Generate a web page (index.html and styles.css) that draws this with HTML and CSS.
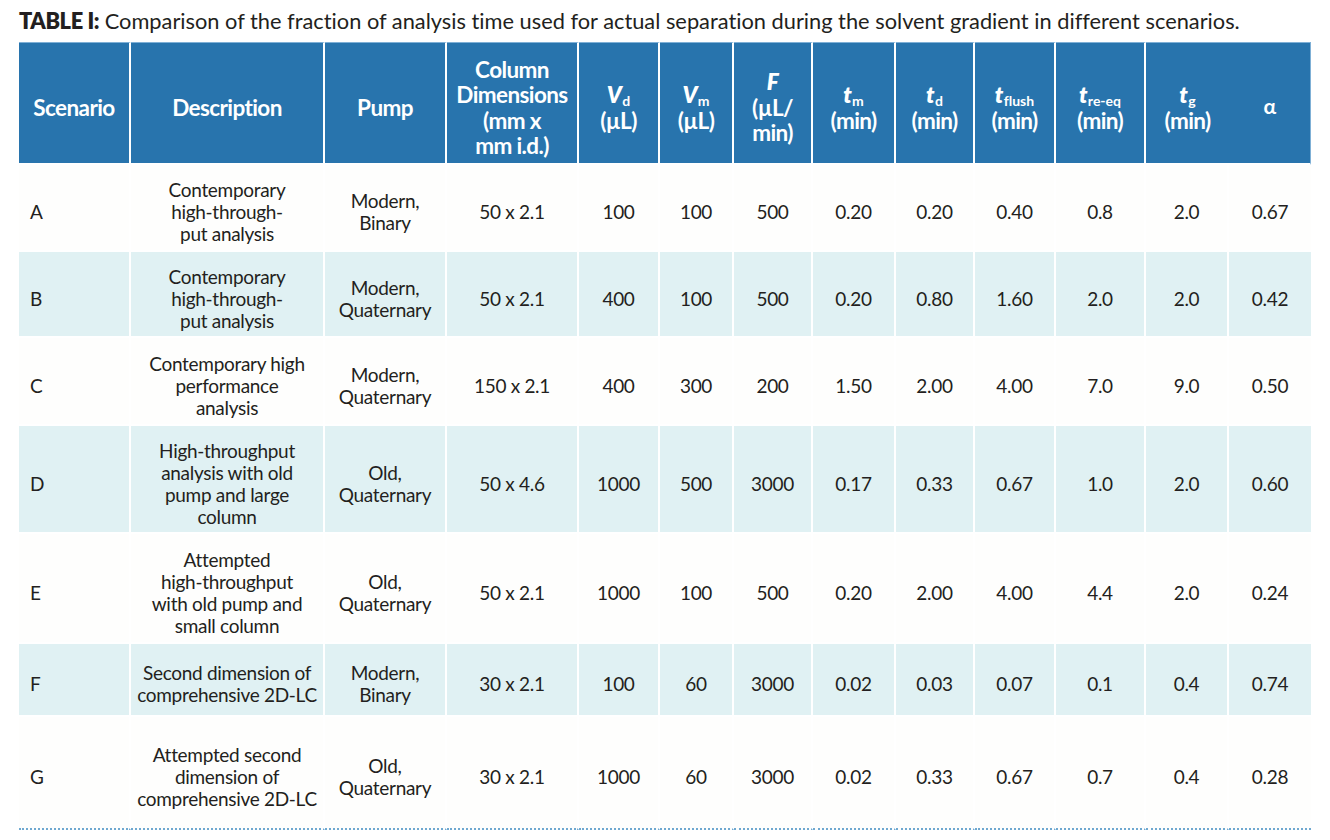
FILE: index.html
```html
<!DOCTYPE html>
<html>
<head>
<meta charset="utf-8">
<link rel="stylesheet" href="styles.css">
</head>
<body>
<div class="page">
  <p class="caption"><b>TABLE I:</b> Comparison of the fraction of analysis time used for actual separation during the solvent gradient in different scenarios.</p>
  <table class="data">
    <colgroup>
      <col class="c-scn"><col class="c-desc"><col class="c-pump"><col class="c-dim">
      <col class="c-vd"><col class="c-vm"><col class="c-f"><col class="c-tm">
      <col class="c-td"><col class="c-tfl"><col class="c-tre"><col class="c-tg"><col class="c-a">
    </colgroup>
    <thead>
      <tr>
        <th>Scenario</th>
        <th>Description</th>
        <th>Pump</th>
        <th>Column<br>Dimensions<br>(mm x<br>mm i.d.)</th>
        <th><i>V</i><sub>d</sub><br>(µL)</th>
        <th><i>V</i><sub>m</sub><br>(µL)</th>
        <th><i>F</i><br>(µL/<br>min)</th>
        <th><i>t</i><sub>m</sub><br>(min)</th>
        <th><i>t</i><sub>d</sub><br>(min)</th>
        <th><i>t</i><sub>flush</sub><br>(min)</th>
        <th><i>t</i><sub>re-eq</sub><br>(min)</th>
        <th class="no-div"><i>t</i><sub>g</sub><br>(min)</th>
        <th class="alpha">α</th>
      </tr>
    </thead>
    <tbody>
      <tr>
        <td class="scn">A</td><td>Contemporary<br>high-through-<br>put analysis</td><td>Modern,<br>Binary</td><td>50 x 2.1</td>
        <td>100</td><td>100</td><td>500</td><td>0.20</td><td>0.20</td><td>0.40</td><td>0.8</td><td>2.0</td><td>0.67</td>
      </tr>
      <tr>
        <td class="scn">B</td><td>Contemporary<br>high-through-<br>put analysis</td><td>Modern,<br>Quaternary</td><td>50 x 2.1</td>
        <td>400</td><td>100</td><td>500</td><td>0.20</td><td>0.80</td><td>1.60</td><td>2.0</td><td>2.0</td><td>0.42</td>
      </tr>
      <tr>
        <td class="scn">C</td><td>Contemporary high<br>performance<br>analysis</td><td>Modern,<br>Quaternary</td><td>150 x 2.1</td>
        <td>400</td><td>300</td><td>200</td><td>1.50</td><td>2.00</td><td>4.00</td><td>7.0</td><td>9.0</td><td>0.50</td>
      </tr>
      <tr>
        <td class="scn">D</td><td>High-throughput<br>analysis with old<br>pump and large<br>column</td><td>Old,<br>Quaternary</td><td>50 x 4.6</td>
        <td>1000</td><td>500</td><td>3000</td><td>0.17</td><td>0.33</td><td>0.67</td><td>1.0</td><td>2.0</td><td>0.60</td>
      </tr>
      <tr>
        <td class="scn">E</td><td>Attempted<br>high-throughput<br>with old pump and<br>small column</td><td>Old,<br>Quaternary</td><td>50 x 2.1</td>
        <td>1000</td><td>100</td><td>500</td><td>0.20</td><td>2.00</td><td>4.00</td><td>4.4</td><td>2.0</td><td>0.24</td>
      </tr>
      <tr>
        <td class="scn">F</td><td>Second dimension of<br>comprehensive 2D-LC</td><td>Modern,<br>Binary</td><td>30 x 2.1</td>
        <td>100</td><td>60</td><td>3000</td><td>0.02</td><td>0.03</td><td>0.07</td><td>0.1</td><td>0.4</td><td>0.74</td>
      </tr>
      <tr>
        <td class="scn">G</td><td>Attempted second<br>dimension of<br>comprehensive 2D-LC</td><td>Old,<br>Quaternary</td><td>30 x 2.1</td>
        <td>1000</td><td>60</td><td>3000</td><td>0.02</td><td>0.33</td><td>0.67</td><td>0.7</td><td>0.4</td><td>0.28</td>
      </tr>
    </tbody>
  </table>
</div>
</body>
</html>
```
FILE: styles.css
```css
html, body {
  margin: 0;
  padding: 0;
  background: #ffffff;
}
.page {
  padding: 0 19px;
  font-family: "Lato", "Open Sans", sans-serif;
  font-variant-ligatures: none;
  color: #231f20;
}
.caption {
  margin: 0;
  height: 42px;
  line-height: 42px;
  font-size: 21.8px;
  color: #231f20;
  white-space: nowrap;
}
.caption b {
  font-weight: 800;
  letter-spacing: -0.4px;
}
.data {
  width: 1292px;
  table-layout: fixed;
  border-collapse: separate;
  border-spacing: 0;
}
.c-scn { width: 112px; }
.c-desc { width: 194px; }
.c-pump { width: 122px; }
.c-dim { width: 132px; }
.c-vd { width: 81px; }
.c-vm { width: 74px; }
.c-f { width: 79px; }
.c-tm { width: 83px; }
.c-td { width: 79px; }
.c-tfl { width: 81px; }
.c-tre { width: 90px; }
.c-tg { width: 83px; }
.c-a { width: 82px; }

.data th {
  background: #2874ad;
  color: #ffffff;
  font-weight: 700;
  font-size: 22.5px;
  line-height: 25.5px;
  letter-spacing: -0.6px;
  text-align: center;
  vertical-align: middle;
  padding: 9px 2px 0;
  white-space: nowrap;
  border-right: 2px solid #ffffff;
  border-bottom: 2px solid #ffffff;
  border-top: 1px solid #7fb0d6;
}
.data thead tr { height: 123px; }
.data th:last-child { border-right: 1px solid #7fb0d6; }
.data th.no-div { border-right: none; }
.data th sub {
  font-size: 14px;
  line-height: 0;
  vertical-align: -3px;
  letter-spacing: 0;
  margin-left: 1px;
}
.data th i { font-style: italic; font-weight: 800; }
.data th.alpha { font-size: 21px; padding-bottom: 4px; }

.data td {
  font-size: 19px;
  line-height: 22px;
  letter-spacing: -0.3px;
  text-align: center;
  vertical-align: middle;
  padding: 9px 2px 0;
  white-space: nowrap;
  border-right: 2px solid #ffffff;
  border-bottom: 2px solid #ffffff;
  color: #231f20;
}
.data td:last-child { border-right: none; }
.data td.scn { text-align: left; padding-left: 11px; }
.data tbody tr:nth-child(even) td { background: #e0f1f3; }
.data tbody tr:nth-child(odd) td { background: #fefefd; }

.data tbody tr:nth-child(1) { height: 87px; }
.data tbody tr:nth-child(2) { height: 86px; }
.data tbody tr:nth-child(3) { height: 88px; }
.data tbody tr:nth-child(4) { height: 108px; }
.data tbody tr:nth-child(5) { height: 110px; }
.data tbody tr:nth-child(6) { height: 73px; }
.data tbody tr:nth-child(7) { height: 113px; }
.data tbody tr:last-child td { border-bottom: 2px dotted #6fa8d0; }
```
